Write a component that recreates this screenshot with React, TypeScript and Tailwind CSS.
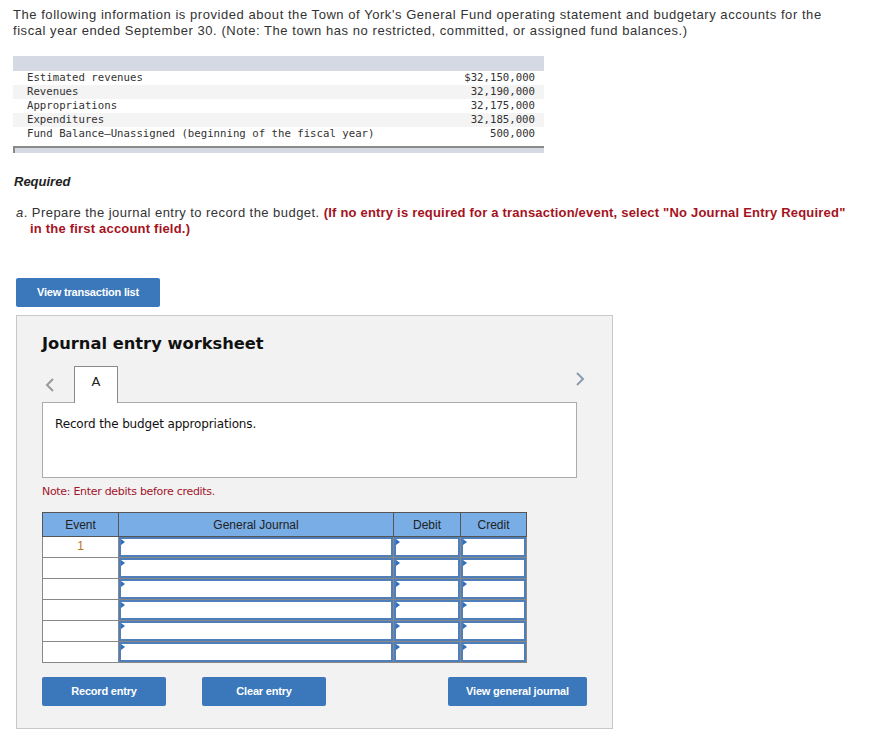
import React from "react";

const rows = [
  ["Estimated revenues", "$32,150,000"],
  ["Revenues", "32,190,000"],
  ["Appropriations", "32,175,000"],
  ["Expenditures", "32,185,000"],
  ["Fund Balance\u2014Unassigned (beginning of the fiscal year)", "500,000"],
];

function InputCell() {
  return (
    <div className="relative h-full border-2 border-[#4f7fba] bg-white">
      <div className="absolute left-0 top-0 h-0 w-0 border-y-[3px] border-l-[4px] border-y-transparent border-l-[#2f6fc0]" />
    </div>
  );
}

export default function App() {
  return (
    <div className="min-h-[743px] bg-white text-[#222] pb-4" style={{ fontFamily: '"Liberation Sans", Arial, sans-serif' }}>
      <div className="pl-[13px] pr-4 pt-[7px] text-[13px] leading-[16px] tracking-[0.55px] text-[#333]">
        The following information is provided about the Town of York's General Fund operating statement and budgetary accounts for the fiscal year ended September 30. (Note: The town has no restricted, committed, or assigned fund balances.)
      </div>

      <div className="ml-[13px] mt-[17px] w-[531px]">
        <div className="h-[15px] bg-[#d5d9e3]" />
        <div className="font-['DejaVu_Sans_Mono',monospace] text-[10.7px] leading-[14px] text-[#333]">
          {rows.map((r, i) => (
            <div key={i} className={`flex h-[14px] justify-between pl-[14px] pr-[9px] ${i % 2 === 1 ? "bg-[#f4f4f4]" : "bg-white"}`}>
              <span>{r[0]}</span>
              <span>{r[1]}</span>
            </div>
          ))}
        </div>
        <div className="mt-[5px] h-[7px] border-l-2 border-t-2 border-[#8a8a8a] bg-[#d5d9e3]" />
      </div>

      <div className="ml-[14px] mt-[19px] text-[13px] font-bold italic text-[#222]">Required</div>

      <div className="ml-[16px] mt-[13px] pl-[14px] -indent-[14px] text-[13px] leading-[16px] tracking-[0.45px] text-[#333] pr-4">
        <span className="italic">a</span>. Prepare the journal entry to record the budget.{" "}
        <span className="font-bold tracking-[0.2px] text-[#a51221]">(If no entry is required for a transaction/event, select "No Journal Entry Required" in the first account field.)</span>
      </div>

      <button className="ml-[16px] mt-[41px] block h-[29px] w-[144px] rounded-[2px] bg-[#3a77bb] text-[11px] font-bold text-white tracking-[-0.2px]">
        View transaction list
      </button>

      <div className="ml-[16px] mt-[8px] w-[597px] border border-[#c8c8c8] bg-[#f2f2f2] pb-[22px]">
        <div className="ml-[25px] mt-[18px] text-[16.3px] font-bold leading-[20px] text-[#111]" style={{ fontFamily: '"DejaVu Sans", Verdana, sans-serif' }}>
          Journal entry worksheet
        </div>

        <div className="relative ml-[25px] mt-[11px] w-[535px]">
          <div className="flex h-[37px] items-end">
            <div className="mb-[10px] w-[32px] pl-[3px]">
              <svg width="10" height="14" viewBox="0 0 10 14"><path d="M8 1 L2 7 L8 13" fill="none" stroke="#9a9a9a" strokeWidth="2" /></svg>
            </div>
            <div className="relative z-10 -mb-px flex h-[37px] w-[44px] items-start justify-center border border-b-0 border-[#8a8a8a] bg-white pt-[5px] text-[13px]" style={{ fontFamily: '"DejaVu Sans", Verdana, sans-serif' }}>
              A
            </div>
            <div className="flex-1" />
            <div className="absolute right-[-8px] top-[7px]">
              <svg width="10" height="14" viewBox="0 0 10 14"><path d="M2 1 L8 7 L2 13" fill="none" stroke="#8a9cb0" strokeWidth="2" /></svg>
            </div>
          </div>
          <div className="h-[76px] border border-[#ababab] bg-white pl-[12px] pt-[12px] text-[12px] text-[#111]" style={{ fontFamily: '"DejaVu Sans", Verdana, sans-serif', letterSpacing: "-0.15px" }}>
            Record the budget appropriations.
          </div>
        </div>

        <div className="ml-[25px] mt-[6px] text-[11px] text-[#a3142b]" style={{ fontFamily: '"DejaVu Sans", Verdana, sans-serif', letterSpacing: "-0.3px" }}>
          Note: Enter debits before credits.
        </div>

        <table className="ml-[25px] mt-[12px] border-collapse text-[12px]" style={{ fontFamily: '"Liberation Sans", Arial, sans-serif' }}>
          <thead>
            <tr className="h-[24px] bg-[#79ade5] text-[#222]">
              <th className="w-[76px] border border-[#555] font-normal">Event</th>
              <th className="w-[275px] border border-[#555] font-normal">General Journal</th>
              <th className="w-[67px] border border-[#555] font-normal">Debit</th>
              <th className="w-[66px] border border-[#555] font-normal">Credit</th>
            </tr>
          </thead>
          <tbody>
            {[0, 1, 2, 3, 4, 5].map((i) => (
              <tr key={i} className="h-[21px]">
                <td className="border border-[#888] bg-white p-0 text-center align-top leading-[19px] text-[#c0731a]">{i === 0 ? "1" : ""}</td>
                <td className="h-[21px] border border-[#888] p-0"><InputCell /></td>
                <td className="h-[21px] border border-[#888] p-0"><InputCell /></td>
                <td className="h-[21px] border border-[#888] p-0"><InputCell /></td>
              </tr>
            ))}
          </tbody>
        </table>

        <div className="ml-[25px] mt-[14px] flex w-[545px] text-[11px] font-bold text-white tracking-[-0.2px]">
          <button className="h-[29px] w-[124px] rounded-[2px] bg-[#3a77bb]">Record entry</button>
          <button className="ml-[36px] h-[29px] w-[124px] rounded-[2px] bg-[#3a77bb]">Clear entry</button>
          <div className="flex-1" />
          <button className="h-[29px] w-[139px] rounded-[2px] bg-[#3a77bb]">View general journal</button>
        </div>
      </div>
    </div>
  );
}
